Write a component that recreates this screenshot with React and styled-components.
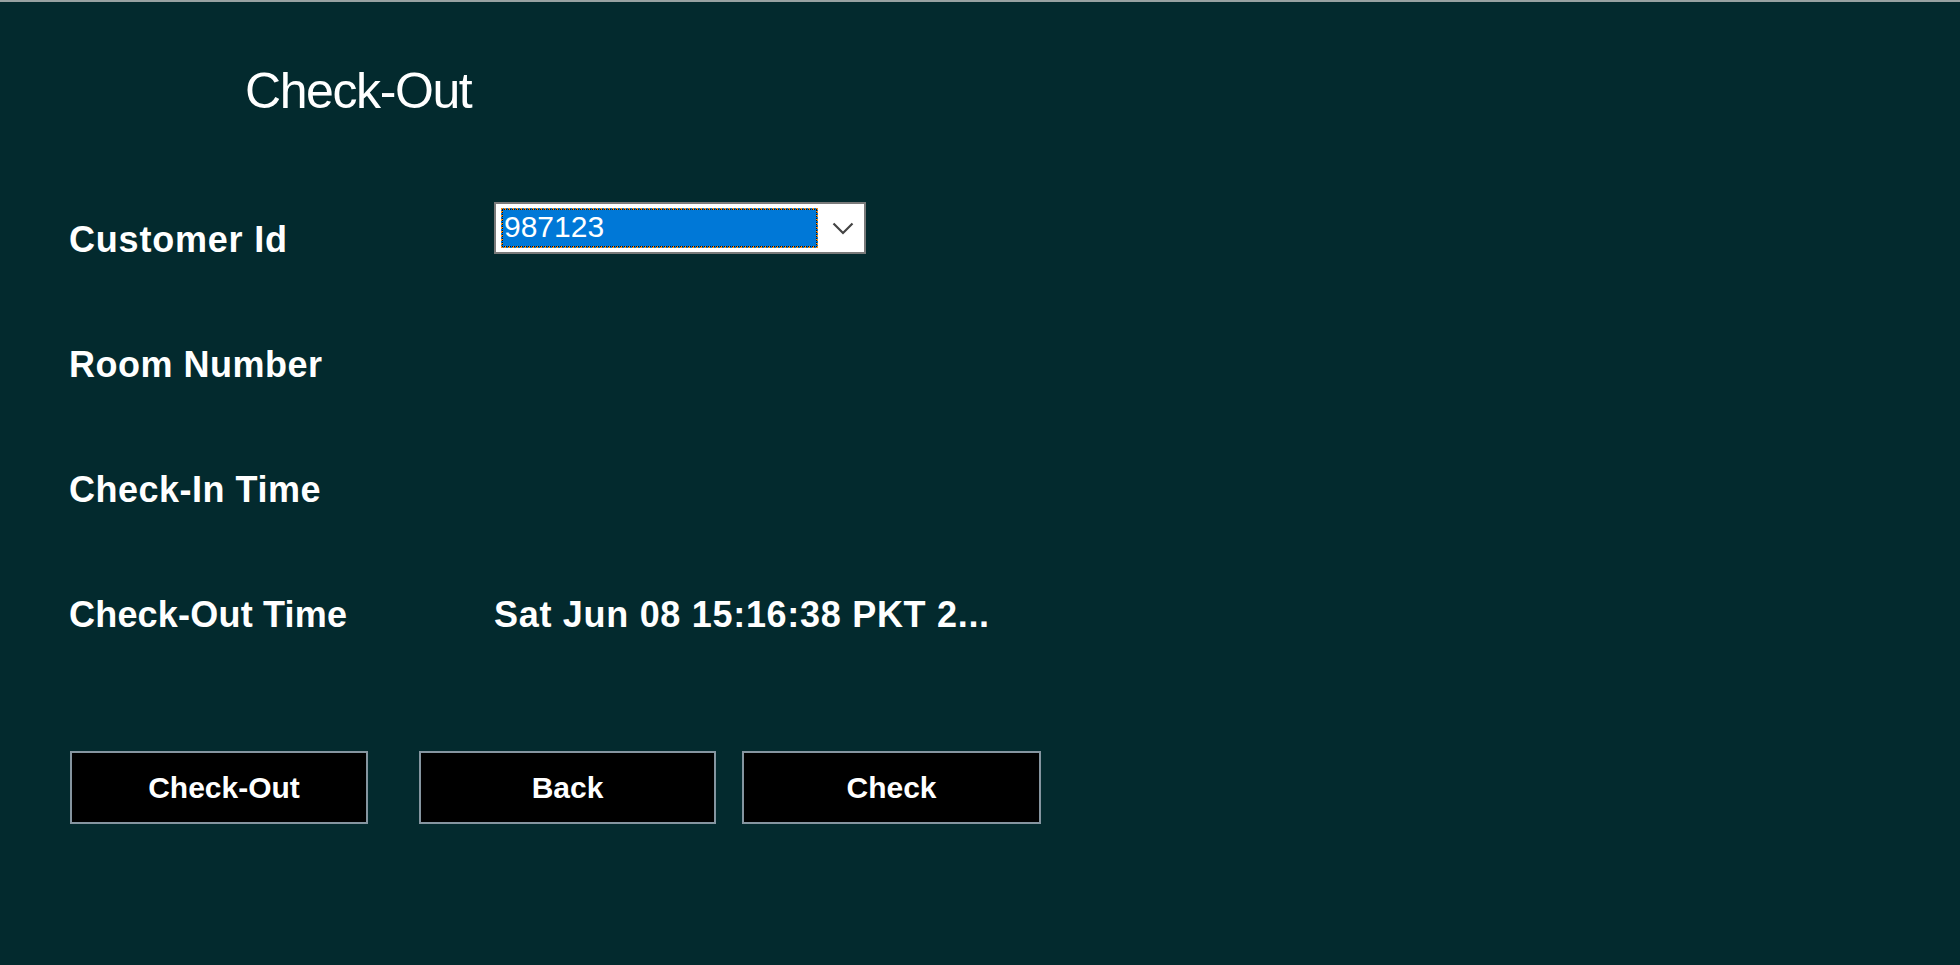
import React from "react";
import styled, { createGlobalStyle } from "styled-components";

const GlobalStyle = createGlobalStyle`
  html, body {
    margin: 0;
    padding: 0;
    background: #032a2e;
  }
  * {
    box-sizing: border-box;
  }
`;

const Window = styled.div`
  width: 1960px;
  height: 965px;
  background: #032a2e;
  border-top: 2px solid #98a2a2;
  color: #fff;
  overflow: hidden;
`;

const Title = styled.h1`
  margin: 64px 0 0 245px;
  font-family: "Liberation Sans", Arial, sans-serif;
  font-weight: 400;
  font-size: 50px;
  line-height: 50px;
  height: 50px;
  letter-spacing: -1.4px;
`;

const Form = styled.div`
  margin: 74px 0 0 69px;
  display: flex;
  flex-direction: column;
`;

const Row = styled.div`
  display: grid;
  grid-template-columns: 425px 1fr;
  align-items: start;
  height: 125px;
`;

const Label = styled.div`
  padding-top: 32px;
  font-family: "Liberation Sans", Arial, sans-serif;
  font-weight: 700;
  font-size: 36px;
  line-height: 36px;
  letter-spacing: ${(p) => p.$spacing || "0.5px"};
  white-space: nowrap;
`;

const Combo = styled.div`
  margin-top: 12px;
  width: 372px;
  height: 52px;
  background: #fff;
  border: 2px solid #7a7a7a;
  display: flex;
  align-items: center;
  padding: 4px 0 4px 5px;
`;

const Selected = styled.div`
  width: 317px;
  height: 40px;
  background: #0078d7;
  border: 2px dotted #f08c1e;
  outline: 1px dotted #111;
  outline-offset: -2px;
  font-family: "Liberation Sans", Arial, sans-serif;
  font-size: 30px;
  line-height: 34px;
  color: #fff;
  padding-left: 1px;
`;

const Arrow = styled.div`
  flex: 1;
  display: flex;
  justify-content: center;
  align-items: center;
  padding-left: 4px;
`;

const Buttons = styled.div`
  display: flex;
  margin: 61px 0 0 70px;
`;

const Button = styled.button`
  width: ${(p) => p.$w || 298}px;
  height: 73px;
  margin-left: ${(p) => p.$ml || 0}px;
  padding: 0 0 0 ${(p) => p.$pl || 0}px;
  background: #000;
  border: 2px solid #8595a0;
  color: #fff;
  font-family: "Liberation Sans", Arial, sans-serif;
  font-weight: 700;
  font-size: 30px;
  cursor: pointer;
`;

export default function App() {
  return (
    <>
      <GlobalStyle />
      <Window>
        <Title>Check-Out</Title>
        <Form>
          <Row>
            <Label $spacing="0.8px">Customer Id</Label>
            <Combo>
              <Selected>987123</Selected>
              <Arrow>
                <svg width="22" height="13" viewBox="0 0 22 13">
                  <path d="M1.5 1.5 L11 11 L20.5 1.5" fill="none" stroke="#444" strokeWidth="2.2" />
                </svg>
              </Arrow>
            </Combo>
          </Row>
          <Row>
            <Label>Room Number</Label>
            <div />
          </Row>
          <Row>
            <Label>Check-In Time</Label>
            <div />
          </Row>
          <Row>
            <Label $spacing="0.2px">Check-Out Time</Label>
            <Label $spacing="0.7px">Sat Jun 08 15:16:38 PKT 2...</Label>
          </Row>
        </Form>
        <Buttons>
          <Button $pl={10}>Check-Out</Button>
          <Button $ml={51} $w={297}>Back</Button>
          <Button $ml={26} $w={299}>Check</Button>
        </Buttons>
      </Window>
    </>
  );
}
